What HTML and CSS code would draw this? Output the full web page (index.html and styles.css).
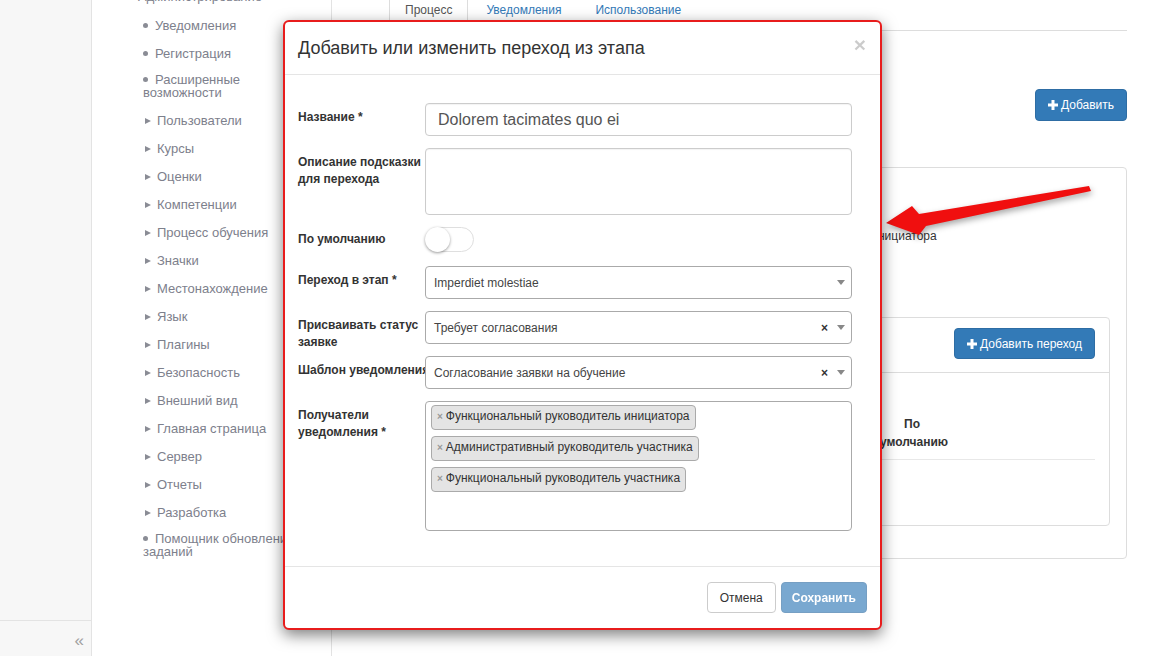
FILE: index.html
```html
<!DOCTYPE html>
<html lang="ru">
  <head>
    <meta charset="UTF-8" />
    <meta name="viewport" content="width=device-width, initial-scale=1.0" />
    <title>Переходы этапа</title>
    <link rel="stylesheet" href="styles.css">
  </head>
  <body>
    <div class="page">
      <div class="rail">
        <div class="rail-footer">«</div>
      </div>

      <div class="sidebar">
        <div class="side-title">Администрирование</div>
        <ul class="side-menu">
          <li><span class="dot"></span>Уведомления</li>
          <li><span class="dot"></span>Регистрация</li>
          <li class="wrap"><span class="dot"></span>Расширенные возможности</li>
          <li><span class="tri"></span>Пользователи</li>
          <li><span class="tri"></span>Курсы</li>
          <li><span class="tri"></span>Оценки</li>
          <li><span class="tri"></span>Компетенции</li>
          <li><span class="tri"></span>Процесс обучения</li>
          <li><span class="tri"></span>Значки</li>
          <li><span class="tri"></span>Местонахождение</li>
          <li><span class="tri"></span>Язык</li>
          <li><span class="tri"></span>Плагины</li>
          <li><span class="tri"></span>Безопасность</li>
          <li><span class="tri"></span>Внешний вид</li>
          <li><span class="tri"></span>Главная страница</li>
          <li><span class="tri"></span>Сервер</li>
          <li><span class="tri"></span>Отчеты</li>
          <li><span class="tri"></span>Разработка</li>
          <li class="wrap"><span class="dot"></span>Помощник обновления заданий</li>
        </ul>
      </div>

      <div class="main">
        <ul class="tabs">
          <li class="tab active">Процесс</li>
          <li class="tab">Уведомления</li>
          <li class="tab">Использование</li>
        </ul>

        <div class="toolbar">
          <button class="btn btn-primary"><svg class="plus" viewBox="0 0 10 10"><rect x="3.5" y="0" width="3" height="10"/><rect x="0" y="3.5" width="10" height="3"/></svg>Добавить</button>
        </div>

        <div class="panel">
          <dl class="info">
            <dt>Название</dt><dd>Dolorem tacimates quo ei</dd>
            <dt>Переход в этап</dt><dd>Imperdiet molestiae</dd>
            <dt>Получатели</dt><dd>Функциональный руководитель инициатора</dd>
          </dl>

          <div class="subpanel">
            <div class="subpanel-head">
              <button class="btn btn-primary"><svg class="plus" viewBox="0 0 10 10"><rect x="3.5" y="0" width="3" height="10"/><rect x="0" y="3.5" width="10" height="3"/></svg>Добавить переход</button>
            </div>
            <div class="subpanel-body">
              <table class="table">
                <thead>
                  <tr>
                    <th>Переход</th>
                    <th class="col-default">По умолчанию</th>
                    <th class="col-actions"></th>
                  </tr>
                </thead>
              </table>
            </div>
          </div>
        </div>
      </div>
    </div>

    <!-- annotation arrow -->
    <svg class="arrow" viewBox="0 0 215 60" width="215" height="60">
      <polygon points="6,42 32,25 39,33 209,5 211,10 46,45 39,54" fill="#f00f0f"/>
    </svg>

    <div class="modal">
      <div class="modal-header">
        <h4 class="modal-title">Добавить или изменить переход из этапа</h4>
        <span class="close">×</span>
      </div>
      <div class="modal-body">
        <div class="form-row">
          <label>Название *</label>
          <input class="input" type="text" value="Dolorem tacimates quo ei" />
        </div>
        <div class="form-row">
          <label>Описание подсказки для перехода</label>
          <textarea class="input textarea"></textarea>
        </div>
        <div class="form-row row-toggle">
          <label class="label-toggle">По умолчанию</label>
          <span class="switch"><span class="knob"></span></span>
        </div>
        <div class="form-row">
          <label>Переход в этап *</label>
          <div class="select">
            <span class="select-value">Imperdiet molestiae</span>
            <span class="caret"></span>
          </div>
        </div>
        <div class="form-row">
          <label class="tight">Присваивать статус заявке</label>
          <div class="select">
            <span class="select-value">Требует согласования</span>
            <span class="clear">×</span>
            <span class="caret"></span>
          </div>
        </div>
        <div class="form-row">
          <label class="nowrap">Шаблон уведомления</label>
          <div class="select">
            <span class="select-value">Согласование заявки на обучение</span>
            <span class="clear">×</span>
            <span class="caret"></span>
          </div>
        </div>
        <div class="form-row row-last">
          <label>Получатели уведомления *</label>
          <div class="multi">
            <span class="chip"><span class="chip-x">×</span>Функциональный руководитель инициатора</span>
            <span class="chip"><span class="chip-x">×</span>Административный руководитель участника</span>
            <span class="chip"><span class="chip-x">×</span>Функциональный руководитель участника</span>
          </div>
        </div>
      </div>
      <div class="modal-footer">
        <button class="btn btn-default">Отмена</button>
        <button class="btn btn-save">Сохранить</button>
      </div>
    </div>
  </body>
</html>
```

FILE: styles.css
```css
body {
  margin: 0;
  font-family: "Liberation Sans", Arial, sans-serif;
  font-size: 12px;
  color: #333;
  background: #fff;
  overflow: hidden;
}
.page {
  display: flex;
  height: 656px;
}
.rail {
  width: 91px;
  background: #f7f7f7;
  border-right: 1px solid #e3e3e3;
  display: flex;
  flex-direction: column;
  justify-content: flex-end;
}
.rail-footer {
  height: 35px;
  border-top: 1px solid #e3e3e3;
  text-align: right;
  padding-right: 7px;
  font-size: 17px;
  line-height: 40px;
  color: #a0a0a0;
}
.sidebar {
  width: 239px;
  border-right: 1px solid #e3e3e3;
  color: #7d808c;
  font-size: 13px;
}
.side-title {
  margin-top: -11px;
  padding-left: 46px;
  line-height: 16px;
}
.side-menu {
  list-style: none;
  margin: 14px 0 0;
  padding: 0 26px 0 51px;
}
.side-menu li {
  line-height: 13px;
  margin-bottom: 15px;
}
.side-menu li.wrap {
  margin-top: -2px;
}
.dot {
  display: inline-block;
  width: 5px;
  height: 5px;
  border-radius: 50%;
  background: #8a8c95;
  margin: 0 7px 2px 0;
  vertical-align: middle;
}
.tri {
  display: inline-block;
  width: 0;
  height: 0;
  border-left: 6px solid #8a8c95;
  border-top: 3px solid transparent;
  border-bottom: 3px solid transparent;
  margin: 0 6px 2px 2px;
  vertical-align: middle;
}
.main {
  flex: 1;
  padding: 0 48px 0 57px;
}
.tabs {
  display: flex;
  list-style: none;
  margin: -10px 0 0;
  padding: 0;
  border-bottom: 1px solid #ddd;
}
.tab {
  padding: 10px 15px;
  line-height: 19px;
  margin-right: 2px;
  margin-bottom: -1px;
  color: #337ab7;
  border: 1px solid transparent;
}
.tab.active {
  color: #555;
  background: #fff;
  border-color: #ddd;
  border-bottom-color: #fff;
}
.toolbar {
  display: flex;
  justify-content: flex-end;
  margin-top: 58px;
}
.btn {
  font-family: inherit;
  font-size: 12px;
  height: 32px;
  padding: 0 12px;
  border-radius: 4px;
  border: 1px solid transparent;
  cursor: pointer;
}
.btn-primary {
  background: #337ab7;
  border-color: #2e6da4;
  color: #fff;
  display: inline-flex;
  align-items: center;
}
.plus {
  width: 10px;
  height: 10px;
  fill: #fff;
  margin-right: 3px;
}
.panel {
  margin-top: 46px;
  height: 367px;
  border: 1px solid #ddd;
  border-radius: 4px;
  padding: 23px 16px 0 15px;
}
.info {
  display: grid;
  grid-template-columns: 288px 1fr;
  margin: 0;
  line-height: 18px;
}
.info dt,
.info dd {
  margin: 0;
}
.subpanel {
  margin-top: 72px;
  height: 207px;
  border: 1px solid #ddd;
  border-radius: 4px;
}
.subpanel-head {
  display: flex;
  justify-content: flex-end;
  padding: 10px 14px 13px;
  border-bottom: 1px solid #ddd;
}
.subpanel-head .btn {
  height: 31px;
}
.subpanel-body {
  padding: 34px 14px 0 15px;
}
.table {
  width: 100%;
  border-collapse: collapse;
  table-layout: fixed;
}
.table th {
  font-weight: bold;
  line-height: 18px;
  padding: 8px;
  border-bottom: 1px solid #e8e8e8;
  text-align: left;
  color: #333;
}
.table .col-default {
  width: 64px;
  text-align: center;
}
.table .col-actions {
  width: 127px;
}
.arrow {
  position: absolute;
  left: 880px;
  top: 181px;
  filter: drop-shadow(1px 3px 3px rgba(0, 0, 0, 0.35));
}
.modal {
  position: absolute;
  left: 283px;
  top: 20px;
  width: 595px;
  background: #fff;
  border: 2px solid #e81c1c;
  border-radius: 6px;
  box-shadow: 0 5px 15px rgba(0, 0, 0, 0.5);
}
.modal-header {
  position: relative;
  padding: 13px;
  border-bottom: 1px solid #e5e5e5;
}
.modal-title {
  margin: 0;
  font-size: 18px;
  font-weight: normal;
  line-height: 26px;
  color: #333;
}
.close {
  position: absolute;
  right: 14px;
  top: 11px;
  font-size: 21px;
  font-weight: bold;
  color: #000;
  opacity: 0.2;
}
.modal-body {
  padding: 28px 28px 35px 13px;
}
.form-row {
  display: grid;
  grid-template-columns: 127px 1fr;
  margin-bottom: 12px;
}
.form-row.row-toggle {
  margin-bottom: 14px;
}
.form-row.row-last {
  margin-bottom: 0;
}
.form-row label {
  font-weight: bold;
  line-height: 17px;
  padding-top: 6px;
}
.form-row .label-toggle {
  padding-top: 4px;
}
.form-row .tight {
  margin-bottom: -12px;
}
.form-row .nowrap {
  white-space: nowrap;
}
.input {
  box-sizing: border-box;
  height: 33px;
  border: 1px solid #ccc;
  border-radius: 4px;
  padding: 0 12px;
  font-family: inherit;
  font-size: 16px;
  color: #555;
  box-shadow: inset 0 1px 1px rgba(0, 0, 0, 0.05);
}
.textarea {
  height: 67px;
  resize: none;
}
.switch {
  position: relative;
  box-sizing: border-box;
  width: 49px;
  height: 25px;
  border: 1px solid #dfdfdf;
  border-radius: 13px;
  background: #fff;
}
.knob {
  position: absolute;
  left: -1px;
  top: -1px;
  width: 25px;
  height: 25px;
  border-radius: 50%;
  background: #fff;
  box-shadow: 0 1px 3px rgba(0, 0, 0, 0.4);
}
.select {
  position: relative;
  box-sizing: border-box;
  height: 33px;
  border: 1px solid #aaa;
  border-radius: 4px;
  background: #fff;
  display: flex;
  align-items: center;
  padding: 0 5px 0 8px;
  color: #444;
}
.select-value {
  flex: 1;
}
.clear {
  font-weight: bold;
  font-size: 12px;
  color: #333;
  margin-right: 9px;
}
.caret {
  width: 0;
  height: 0;
  border-top: 5px solid #888;
  border-left: 4px solid transparent;
  border-right: 4px solid transparent;
  margin-right: 1px;
}
.multi {
  box-sizing: border-box;
  height: 130px;
  border: 1px solid #aaa;
  border-radius: 4px;
  padding: 3px 5px;
  display: flex;
  flex-direction: column;
  align-items: flex-start;
  gap: 6px;
}
.chip {
  height: 25px;
  box-sizing: border-box;
  line-height: 21px;
  padding: 0 5px;
  background: #e4e4e4;
  border: 1px solid #aaa;
  border-radius: 4px;
  color: #333;
}
.chip-x {
  color: #999;
  font-weight: bold;
  font-size: 10px;
  margin-right: 3px;
}
.modal-footer {
  display: flex;
  justify-content: flex-end;
  gap: 5px;
  padding: 15px 13px;
  border-top: 1px solid #e5e5e5;
}
.modal-footer .btn {
  height: 31px;
  padding: 0 12px;
}
.modal-footer .btn-save {
  padding: 0 10px;
}
.btn-default {
  background: #fff;
  border-color: #ccc;
  color: #333;
}
.btn-save {
  background: #337ab7;
  border-color: #2e6da4;
  color: #fff;
  font-weight: bold;
  opacity: 0.65;
}
```
